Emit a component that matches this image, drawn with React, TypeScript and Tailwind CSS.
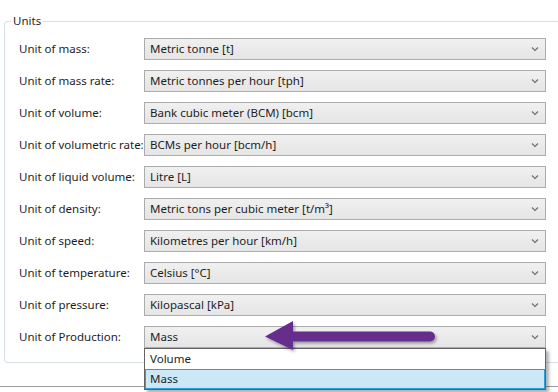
import React from "react";

const rows: [string, string][] = [
  ["Unit of mass:", "Metric tonne [t]"],
  ["Unit of mass rate:", "Metric tonnes per hour [tph]"],
  ["Unit of volume:", "Bank cubic meter (BCM) [bcm]"],
  ["Unit of volumetric rate:", "BCMs per hour [bcm/h]"],
  ["Unit of liquid volume:", "Litre [L]"],
  ["Unit of density:", "Metric tons per cubic meter [t/m³]"],
  ["Unit of speed:", "Kilometres per hour [km/h]"],
  ["Unit of temperature:", "Celsius [°C]"],
  ["Unit of pressure:", "Kilopascal [kPa]"],
  ["Unit of Production:", "Mass"],
];

function Chevron() {
  return (
    <svg width="8" height="6" viewBox="0 0 8 6" className="mr-[6px]">
      <path d="M1 1.5 L4 4.5 L7 1.5" fill="none" stroke="#707070" strokeWidth="1.2" />
    </svg>
  );
}

export default function App() {
  return (
    <div
      className="relative w-[558px] h-[392px] bg-white overflow-hidden text-[11.5px] text-[#1e1e1e] whitespace-nowrap"
      style={{ fontFamily: '"Noto Sans", "Open Sans", sans-serif' }}
    >
      <div className="pt-[21px] pl-[4px]">
        <div className="relative w-[556px] h-[342px] border border-[#d5dfe5] rounded-[3px] pt-[16px] pl-[14px]">
          <span className="absolute left-[6px] -top-[10px] bg-white px-[2px] leading-[18px]">Units</span>
          <div className="flex flex-col gap-[10px]">
            {rows.map(([label, value], i) => (
              <div key={i} className="flex items-center h-[22px]">
                <div className="w-[125px] leading-[16px]">{label}</div>
                <div className="w-[402px] h-[22px] border border-[#acacac] bg-gradient-to-b from-[#f0f0f0] to-[#e5e5e5] flex items-center justify-between pl-[5px]">
                  <span className="leading-[16px]">{value}</span>
                  <Chevron />
                </div>
              </div>
            ))}
          </div>
        </div>
      </div>
      <div className="mt-[23px] h-px bg-[#a0a0a0]" />

      <div className="absolute left-[144px] top-[348px] w-[402px] h-[42px] border border-[#646464] bg-white shadow-[3px_3px_3px_rgba(0,0,0,0.3)]">
        <div className="h-[20px] pl-[5px] flex items-center leading-[16px]">Volume</div>
        <div className="h-[20px] pl-[4px] flex items-center bg-[#cce8f6] border border-[#26a0da] leading-[16px]">Mass</div>
      </div>

      <svg className="absolute left-[260px] top-[318px]" width="185" height="36" viewBox="0 0 185 36">
        <defs>
          <filter id="sh" x="-10%" y="-30%" width="130%" height="180%">
            <feDropShadow dx="1.5" dy="2" stdDeviation="1.5" floodColor="#000" floodOpacity="0.35" />
          </filter>
        </defs>
        <g filter="url(#sh)">
          <path d="M5 18.5 L33 3 L33 13.5 L170 13.5 A5 5 0 0 1 170 23.5 L33 23.5 L33 32 Z" fill="#662d8c" />
        </g>
      </svg>
    </div>
  );
}
